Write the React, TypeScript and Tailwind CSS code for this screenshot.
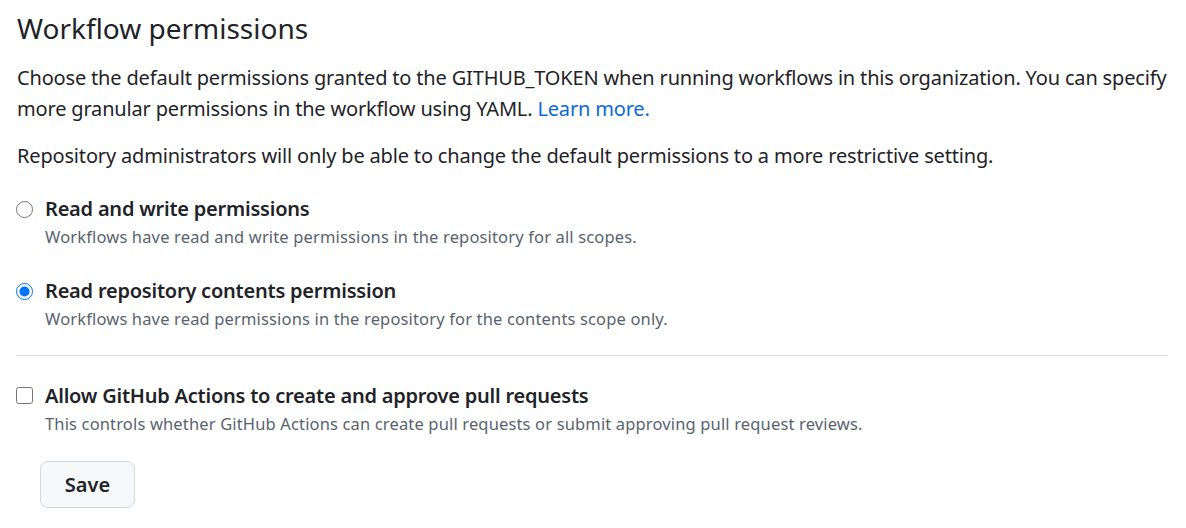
import React from 'react';

const App = () => {
  return (
    <div className="bg-white w-[1186px] h-[528px] overflow-hidden text-[#1f2328] font-['Noto_Sans',sans-serif]">
      <div className="pl-[17px] pr-[14px]">
        <h2 className="pt-[9px] text-[28px] leading-[38px] font-normal">Workflow permissions</h2>

        <p className="mt-[15px] text-[20px] leading-[31px] tracking-[-0.17px]">
          Choose the default permissions granted to the GITHUB_TOKEN when running workflows in this organization. You can specify more granular permissions in the workflow using YAML.{' '}
          <a href="#" className="text-[#0969da]">Learn more.</a>
        </p>

        <p className="mt-[17px] text-[20px] leading-[30px] tracking-[-0.17px]">
          Repository administrators will only be able to change the default permissions to a more restrictive setting.
        </p>

        {/* Permission options */}
        <div className="mt-[23px]">
          <label className="flex items-start gap-[12px]">
            <input type="radio" name="perm" className="mt-[7px] -ml-px w-[17px] h-[17px] shrink-0" />
            <div>
              <div className="text-[20px] leading-[30px] font-semibold tracking-[-0.22px]">Read and write permissions</div>
              <div className="text-[16.5px] leading-[26px] tracking-[0.15px] text-[#59636e]">
                Workflows have read and write permissions in the repository for all scopes.
              </div>
            </div>
          </label>

          <label className="flex items-start gap-[12px] mt-[26px]">
            <input type="radio" name="perm" defaultChecked className="mt-[7px] -ml-px w-[17px] h-[17px] shrink-0" />
            <div>
              <div className="text-[20px] leading-[30px] font-semibold tracking-[-0.22px]">Read repository contents permission</div>
              <div className="text-[16.5px] leading-[26px] tracking-[0.15px] text-[#59636e]">
                Workflows have read permissions in the repository for the contents scope only.
              </div>
            </div>
          </label>
        </div>

        <hr className="mt-[23px] -ml-px mr-[4px] border-t border-[#d8dee4]" />

        <label className="flex items-start gap-[12px] mt-[25px]">
          <input type="checkbox" className="mt-[6px] -ml-px w-[17px] h-[17px] shrink-0" />
          <div>
            <div className="text-[20px] leading-[30px] font-semibold tracking-[-0.22px]">Allow GitHub Actions to create and approve pull requests</div>
            <div className="text-[16.5px] leading-[26px] tracking-[0.15px] text-[#59636e]">
              This controls whether GitHub Actions can create pull requests or submit approving pull request reviews.
            </div>
          </div>
        </label>

        <button className="mt-[24px] ml-[23px] w-[95px] h-[47px] rounded-[8px] border border-[#d1d9e0] bg-[#f6f8fa] text-[20px] font-semibold">
          Save
        </button>
      </div>
    </div>
  );
};

export default App;
